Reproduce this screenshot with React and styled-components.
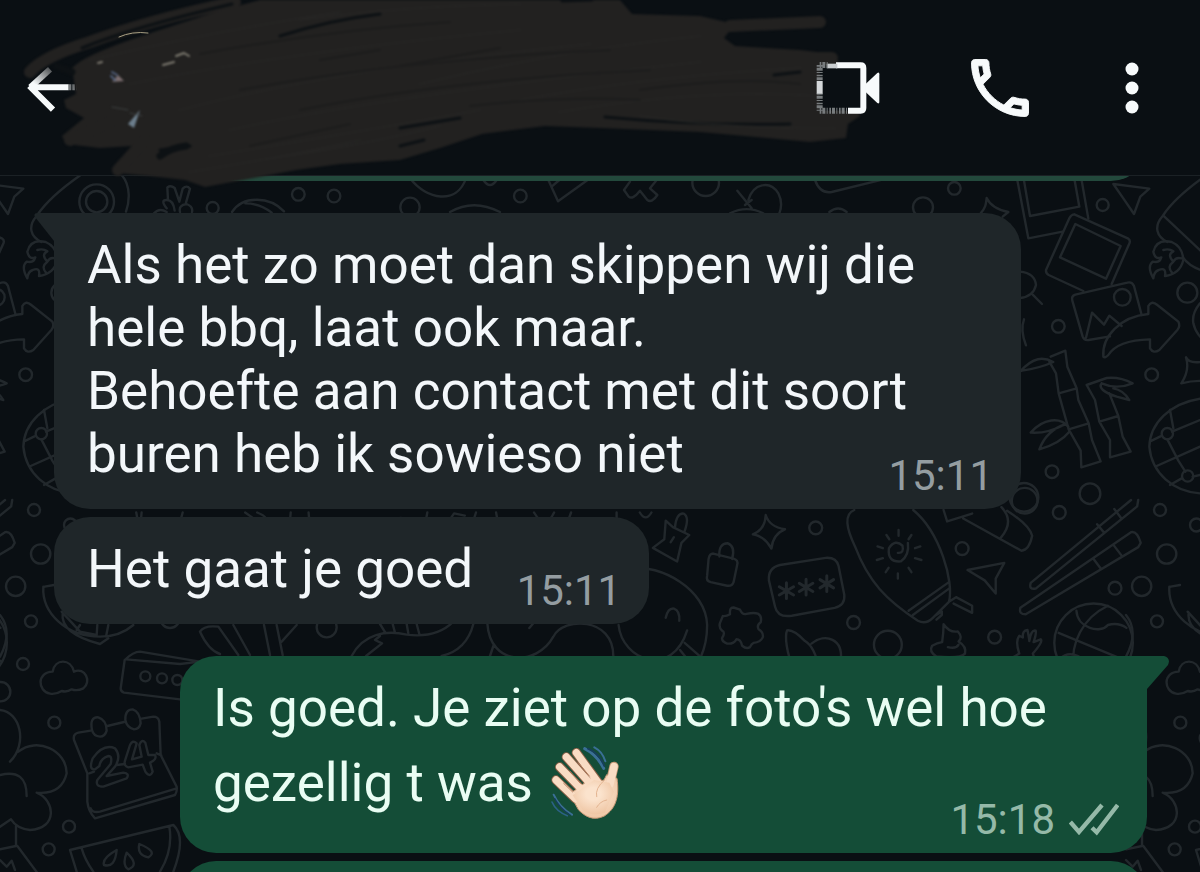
import React from "react";
import styled, { createGlobalStyle } from "styled-components";

const GlobalStyle = createGlobalStyle`
  * { box-sizing: border-box; }
  html, body { margin: 0; background: #0a0f13; }
  body { font-family: Roboto, "Liberation Sans", sans-serif; }
`;

const Screen = styled.div`
  position: relative;
  z-index: 0;
  display: flex;
  flex-direction: column;
  height: 100vh;
  overflow: hidden;
  background: #0a0f13;
`;

const WallpaperSvg = styled.svg`
  position: absolute;
  top: 0;
  left: 0;
  z-index: -1;
  width: 100%;
  height: 100%;
  fill: none;
  stroke: #22282c;
  stroke-width: 2.4;
  stroke-linecap: round;
  stroke-linejoin: round;

  path, circle, rect { vector-effect: non-scaling-stroke; }
`;

const Header = styled.header`
  position: relative;
  z-index: 1;
  flex: none;
  display: flex;
  align-items: center;
  justify-content: space-between;
  height: 176px;
  padding: 0 56px 0 26px;
  border-bottom: 1px solid #1b2125;
  background: #0a0f13;
`;

const Actions = styled.div`
  position: relative;
  display: flex;
  align-items: center;
  gap: 82px;
`;

const IconButton = styled.button`
  display: flex;
  padding: 0;
  border: 0;
  background: none;
  color: #f7fafb;
  cursor: pointer;
`;

const ScribbleSvg = styled.svg`
  position: absolute;
  top: 0;
  left: 0;
  width: 900px;
  height: 200px;
  pointer-events: none;
`;

const Chat = styled.main`
  flex: 1;
  display: flex;
  flex-direction: column;
  min-height: 0;
  overflow: hidden;
  padding: 0 53px 0 54px;
`;

const Bubble = styled.article`
  position: relative;
  flex: none;
  display: grid;
  align-self: ${(p) => (p.$out ? "flex-end" : "flex-start")};
  max-width: 967px;
  margin-top: ${(p) => (p.$first ? "32px" : "8px")};
  padding: 21px 28px 23px 33px;
  border-radius: 36px;
  border-top-left-radius: ${(p) => (p.$first && !p.$out ? "0" : "36px")};
  border-top-right-radius: ${(p) => (p.$first && p.$out ? "0" : "36px")};
  background: ${(p) => (p.$out ? "#144d37" : "#1f2629")};
  color: ${(p) => (p.$out ? "#e9fdf3" : "#f3f7fa")};
`;

const CutOffBubble = styled(Bubble)`
  width: 100%;
  height: 120px;
  margin-top: ${(p) => (p.$above ? "-115px" : "8px")};
  background: ${(p) => (p.$above ? "#23493c" : "#144d37")};
`;

const Text = styled.p`
  grid-area: 1 / 1;
  margin: 0;
  font-size: 53px;
  line-height: 63px;
  white-space: pre-line;
`;

const MetaSpace = styled.span`
  display: inline-block;
  width: ${(p) => (p.$ticks ? "190px" : "148px")};
`;

const Meta = styled.footer`
  grid-area: 1 / 1;
  place-self: end;
  display: flex;
  align-items: center;
  gap: 14px;
  margin-bottom: -10px;
  font-size: 42px;
  line-height: 40px;
  color: ${(p) => (p.$out ? "#95b9a8" : "#949da1")};
`;

const Tail = styled.svg`
  position: absolute;
  top: 0;
  ${(p) => (p.$out ? "right: -22px;" : "left: -20px;")}
  fill: ${(p) => (p.$out ? "#144d37" : "#1f2629")};
`;

const EmojiSvg = styled.svg`
  vertical-align: -29px;
`;

function Area({ x, y, zoom, children }) {
  return <g transform={`translate(${x} ${y}) scale(${1 / zoom})`}>{children}</g>;
}

function Rings({ at }) {
  return at.map(([cx, cy, r]) => <circle key={`${cx}-${cy}`} cx={cx} cy={cy} r={r} />);
}

function Wallpaper() {
  return (
    <WallpaperSvg viewBox="0 0 1200 872" preserveAspectRatio="xMinYMin slice" aria-hidden="true">
      <defs>
        <g id="doodles">
          {/* photos, arrow, rocket, bamboo and football */}
          <Area x={960} y={170} zoom={3}>
            <path d="M62 130C78 112 78 100 80 84Q95 116 145 126L128 140" />
            <path d="M170 20L205 205L308 185M190 20L210 138L358 110L342 20M363 20L385 146" />
            <path d="M343 133L505 206Q511 210 509 218L455 342M343 133Q334 133 328 145L258 300Q257 310 266 315L370 363" />
            <path d="M346 162L482 228L438 326L300 262Z" />
            <path d="M545 435L522 348Q516 334 502 338L346 374Q333 378 337 392L368 500Q372 512 386 510L450 499M378 503L396 428L432 464L448 437L485 468" />
            <path d="M430 560C425 500 480 440 565 432L565 408Q575 390 592 405L655 455Q662 468 652 480L598 540Q580 552 570 535L570 508C500 510 460 530 445 555Q435 565 430 560Z" />
            <path d="M460 42L568 56L541 80L522 132L492 88Z" />
            <path d="M610 135C640 90 690 50 740 15M863 15C893 50 885 100 876 125M608 138C580 170 590 200 622 216M610 137L725 245M668 262Q690 292 730 302" />
            <path d="M580 325Q560 290 578 275Q600 280 604 262Q585 270 580 245Q590 205 635 216Q668 230 670 270Q660 312 615 318Q620 290 596 300Q582 305 580 325ZM610 240Q628 235 640 244Q620 254 640 275Q648 260 664 265M640 275Q620 290 636 308" />
            <path d="M180 305Q225 310 228 345Q220 380 180 384M218 374L246 402M192 448Q180 480 198 526M180 605C220 560 250 560 280 576Q240 594 186 602M272 560L316 542L322 590L350 655L296 670L288 610L268 575M296 670L326 778L386 760L355 690L350 655M326 778L362 842L364 892L422 874L396 810L386 760" />
            <path d="M380 645L440 624Q480 620 518 640Q470 660 425 640M425 640Q410 660 470 680L508 690Q490 660 460 655M380 645L405 690L418 755L475 738L448 670M418 755L450 810L450 862L512 845L488 800L475 738M325 770C300 740 250 745 212 788Q260 792 318 762Q260 780 238 838Q300 820 328 785" />
            <path d="M720 686C630 700 570 760 568 830C575 910 640 965 720 970M720 750L636 785M640 775L630 720M622 808L655 872L676 905M590 888L720 830M575 812L606 797M665 925L630 945M698 920L720 915" />
            <path d="M765 565Q690 590 678 562Q690 600 664 640Q720 625 770 640M720 400Q695 430 700 460Q705 485 725 505" />
            <Rings at={[[428, 105, 18], [295, 469, 19], [487, 382, 25], [682, 368, 30], [575, 614, 19], [276, 905, 19], [390, 971, 31], [192, 982, 43], [788, 95, 52], [788, 95, 32], [622, 791, 17], [683, 918, 17]]} />
          </Area>

          {/* doodles peeking out below the header */}
          <Area x={0} y={0} zoom={3}>
            <path d="M462 640Q478 622 500 636M500 625Q480 600 500 600Q520 600 524 632M504 600L502 562Q512 554 524 564L538 605L548 566Q560 554 570 566L558 608M540 636Q535 615 560 612Q580 620 576 636M696 636C730 585 810 590 852 634M736 610Q780 610 815 638" />
            <Rings at={[[638, 624, 18], [895, 583, 19], [1002, 588, 19]]} />
          </Area>
          <Area x={400} y={0} zoom={3}>
            <path d="M30 535C80 600 170 615 198 535M150 636Q220 595 300 636M445 540L474 604L570 535M455 560L478 540M690 545L672 570L686 590Q698 600 720 572L742 600Q756 610 772 585L750 565L770 540M1012 572L1055 625M1045 600C1060 550 1110 540 1135 580Q1150 610 1138 640M1035 615L1055 600M990 640Q1040 615 1090 640M250 540Q270 570 290 540" />
            <Rings at={[[30, 622, 29], [361, 588, 19], [917, 548, 40]]} />
          </Area>
          <Area x={800} y={0} zoom={3}>
            <path d="M45 540Q60 582 95 576L250 538M88 636Q115 615 140 636" />
            <Rings at={[[463, 565, 19], [369, 622, 30]]} />
          </Area>

          {/* surfboard, password, chopsticks, basketball */}
          <Area x={640} y={500} zoom={2.8}>
            <path d="M72 58L92 76L138 98L116 120L104 172L36 134L68 110ZM98 76Q102 36 122 38Q140 48 124 90M95 104L86 118" />
            <path d="M222 158Q220 122 245 121Q268 130 258 165M205 150L262 164Q276 168 272 182L262 230Q258 242 244 240L198 230Q184 226 188 212L192 165Q195 150 205 150Z" />
            <path d="M352 42Q362 75 406 82Q372 95 368 136Q350 102 316 96Q350 84 352 42Z" />
            <path d="M392 182L520 162Q550 160 556 185L572 265Q575 295 545 302L425 324Q385 330 378 298L361 225Q358 190 392 182Z" />
            <path strokeWidth="3" d="M410 232L410 276M390 243L430 266M390 266L430 243M465 222L465 266M446 233L484 256M446 256L484 233M523 212L523 256M504 223L542 246M504 246L542 223" />
            <path d="M600 28C570 40 578 80 602 130C640 230 690 280 778 338Q800 350 820 330L865 285C880 230 840 90 765 28M752 310L862 232M764 322L868 246M866 284L885 272L930 296V316L878 290M825 325L845 312V322L830 335" />
            <path d="M722 148Q740 150 735 128Q715 108 697 135Q692 175 730 172Q755 155 750 120M724 84V100M722 206V220M690 98L698 110M760 98L752 110M665 130L680 135M785 130L770 135M663 168L680 163M788 168L770 163M688 202L696 190M760 202L752 190" />
            <path d="M850 28L860 60L930 38M905 52L1068 142Q1090 140 1098 100Q1090 70 1028 30M1012 20Q1050 60 1010 106" />
            <path d="M917 196L1020 176L996 220L996 262L965 225Z" />
            <path d="M1395 0L1392 18L1108 248Q1088 252 1094 232L1375 0M1280 68L1300 92M1328 25L1348 52M1065 302L1375 90Q1392 86 1402 120L1395 132L1080 320Q1060 320 1065 302ZM1270 165L1290 192M1325 125L1348 155" />
            <path d="M232 325Q242 326 252 320Q250 300 262 301L280 307Q286 322 298 319Q318 314 330 318Q342 324 338 342Q326 350 332 362Q346 370 344 384Q338 398 318 400Q312 402 308 412Q298 418 286 408Q282 390 270 390Q262 404 244 402Q228 396 230 386Q240 370 230 366Q220 358 224 344Z" />
            <path d="M430 470C410 430 405 380 412 365Q430 362 462 395Q490 412 500 470M480 402C520 370 570 390 562 450M562 442Q590 435 595 470M850 348Q866 372 890 368Q905 385 892 396Q915 410 910 430Q895 445 830 438Q808 425 818 408Q832 400 846 398Q850 370 850 348ZM862 412Q885 418 892 405" />
            <path d="M1000 466L1062 430Q1050 395 1062 380L1072 385Q1070 365 1085 364Q1090 390 1090 395Q1095 362 1108 366Q1110 375 1102 398L1122 390Q1130 395 1100 430L1112 466" />
            <path d="M1172 372L1365 452M1310 296C1240 330 1205 400 1214 470M1222 310C1225 360 1290 375 1310 350Q1340 342 1362 358M1176 445Q1210 410 1265 468" />
            <path d="M-30 190C60 180 185 250 188 350Q188 400 170 440M-60 350C-50 450 90 500 132 365M72 330Q78 302 95 304Q112 310 110 338M125 400L165 435L155 465M112 420L138 452M92 445L112 470" />
            <Rings at={[[492, 78, 18], [902, 136, 18], [1174, 35, 18], [1330, 247, 18], [598, 343, 18], [694, 405, 39], [993, 384, 18], [1270, 400, 110], [1077, 2, 36], [1558, 70, 18]]} />
          </Area>

          {/* cloud, calendar, router, tree and melon */}
          <Area x={0} y={490} zoom={3}>
            <path d="M130 290C125 370 200 440 300 440Q360 440 400 405M134 290L162 285M188 370Q180 430 300 462L325 445M185 365L240 425L290 435L292 405M240 405L230 420M325 405L318 440" />
            <path d="M150 611C112 604 110 546 158 545C165 505 212 505 222 545C255 530 276 575 250 595Q232 604 215 598Q200 608 185 603Q168 614 150 611Z" />
            <path d="M600 515L420 485Q400 485 374 510L362 595Q362 605 372 608L540 628M378 508L540 522M600 515L540 522" />
            <path d="M272 722L235 728Q218 732 222 750L262 850L262 935Q265 965 285 985L525 915Q532 905 530 890L482 795L478 695Q475 680 460 680L425 686M322 708L372 696M268 850L282 845M272 955Q278 970 300 965L530 895M470 790L484 796M350 825L375 822" />
            <path d="M276 720Q268 680 295 682Q320 690 320 722Q315 740 300 740Q280 738 276 720ZM376 690Q375 658 398 658Q420 665 422 700Q418 718 402 718Q380 712 376 690Z" />
            <path d="M285 838Q265 840 278 805Q310 760 345 775Q365 800 345 830L320 858L370 848Q390 850 380 865L310 890Q285 890 292 870L332 822Q338 798 325 798Q302 805 298 828ZM390 765Q398 748 410 760L396 808L425 800L418 765Q425 745 436 758L445 795L465 795Q472 808 450 818L458 845Q450 865 436 845L428 824L385 832Q370 828 375 812Z" />
            <path d="M0 660C60 665 85 760 30 815M55 785C110 740 200 780 200 850Q185 915 110 908M110 908C165 930 175 1015 90 1020Q50 1015 33 988L0 1010M0 855Q80 835 80 918M48 1008V1068L0 1078M52 1068L110 1146M0 1110L20 1130L35 1112L45 1140" />
            <path d="M230 1145L210 1080L520 1005Q560 1040 520 1145M245 1075Q255 1110 280 1145M508 1010Q520 1080 480 1145M350 1080Q305 1105 312 1125Q345 1135 350 1080ZM380 1088Q365 1125 385 1138Q420 1125 380 1088ZM418 1062Q410 1095 445 1102Q475 1085 418 1062Z" />
            <path d="M600 425Q612 405 655 410L715 495M600 425Q625 480 660 492M700 405L750 495M792 405L810 495M830 405L848 495M845 455L890 405M0 375Q40 425 0 500" />
            <Rings at={[[102, 60, 18], [122, 192, 29], [47, 289, 29], [93, 394, 18], [69, 522, 18], [2, 605, 29], [163, 698, 18], [207, 1010, 18], [146, 1078, 18], [436, 559, 15], [486, 565, 15], [532, 570, 15], [510, 385, 29]]} />
          </Area>
          <Area x={260} y={600} zoom={3}>
            <path d="M275 168C310 100 380 90 440 104Q530 115 580 65M318 168L366 130L345 120L360 108M360 72L376 98M398 72L405 98M440 72L445 100M470 72L478 102M545 168Q620 150 640 72M682 70C690 200 830 200 880 110C910 50 1060 50 1060 168M690 168L700 138M808 84L820 70" />
            <circle cx="200" cy="82" r="30" />
          </Area>
          <Area x={180} y={840} zoom={1.537}>
            <path d="M115 64Q112 38 124 38Q134 40 130 64M162 64Q158 38 170 38Q182 42 178 64M225 38L240 64L248 38M288 64Q295 40 320 44L312 64M345 38Q358 50 348 64M375 62L425 42M484 64Q485 50 497 38M545 38L552 64M590 38V64M645 64L650 38L680 62M752 64Q775 38 808 40M775 64Q790 45 835 40M860 64Q905 30 965 64M1005 64L1012 38M1048 38Q1080 80 1115 38M1180 46L1215 62M1222 38L1225 62M1280 38L1285 64M1318 38L1325 64" />
          </Area>
          <Area x={130} y={500} zoom={2.24}>
            <path d="M14 28L18 50M26 28L24 50M118 28L112 50M258 28L275 40L262 50M285 28Q315 40 298 50M360 28L358 50M400 28L402 50M530 50Q540 36 552 50M594 50Q606 30 620 50M662 50L666 28M712 50L726 30L750 35M768 50L775 28M820 28L824 50M905 28Q930 70 950 28M980 50L988 28M1040 50L1045 42L1090 50V28M1142 28Q1155 50 1168 28" />
          </Area>
        </g>
      </defs>
      <use href="#doodles" x="-1126" />
      <use href="#doodles" />
      <use href="#doodles" x="1126" />
    </WallpaperSvg>
  );
}

function Scribble() {
  return (
    <ScribbleSvg viewBox="0 0 900 200" aria-hidden="true" fill="none" strokeLinecap="round" strokeLinejoin="round">
      <defs>
        <filter id="soft" x="-5%" y="-5%" width="110%" height="110%" colorInterpolationFilters="sRGB">
          <feGaussianBlur stdDeviation="1" />
        </filter>
      </defs>
      <g filter="url(#soft)">
        <path
          fill="#222120"
          d="M72 68C90 50 150 34 215 12L260 0H620L632 14L700 16L735 24L724 38L735 46L800 50L835 54L842 72L838 92L856 106L860 116L848 124L846 138L810 142L700 132L600 128L545 126L482 134L440 148L400 160L340 164L296 170L205 187L185 180L150 176L116 173L132 146L100 148L66 144L62 136L84 118L66 108L64 100L76 94Z"
        />
        <g stroke="#222120" strokeWidth="12">
          <path d="M30 72Q44 56 90 42Q150 20 235 2M730 26L820 22M118 170L145 140M800 58L832 58M70 140L110 122M800 134L840 132" />
        </g>
        <g stroke="#0d1114" strokeWidth="3">
          <path d="M82 48Q130 28 232 4M280 36Q330 20 380 14M160 150L190 146M400 128L460 118M400 146L424 140M605 117Q700 126 790 124M774 75L800 72M562 1L592 0" />
          <path strokeWidth="7" d="M56 66L72 72M160 156Q170 148 186 146" />
        </g>
        <g stroke="#272625" strokeWidth="2" opacity="0.7">
          <path d="M90 60Q220 30 340 12M130 84Q300 50 520 30M180 110Q330 70 590 44M230 130Q380 96 700 62M210 156Q370 130 480 110M260 160Q360 146 440 126M420 84Q560 50 700 36M520 100Q650 76 800 68M560 112Q700 88 820 96M300 20Q400 6 520 4M640 116Q740 130 835 128M190 172Q290 156 360 140" />
        </g>
        <g stroke="#1c1c1c" strokeWidth="2" opacity="0.8">
          <path d="M200 54Q330 30 450 22M240 90Q400 60 610 50M300 110Q450 80 650 70M400 66L500 48M640 90Q740 76 800 84M320 60L380 50M470 106Q560 96 640 100M250 146L350 124" />
        </g>
      </g>
      <path d="M119 37Q132 31 148 33" stroke="#aaa184" strokeWidth="1" />
      <g filter="url(#soft)">
        <path d="M176 56L184 53L189 56M163 65L174 62M98 63L102 62" stroke="#7d7a70" strokeWidth="2" />
        <path d="M112 82L118 75L124 81Z" fill="#7c6e70" />
        <path d="M112 72L117 75M111 76L115 80" stroke="#52617d" strokeWidth="2" />
        <path d="M128 124L140 110L134 128Z" fill="#6d7f8d" />
        <path d="M112 107L128 110M130 113L142 116" stroke="#3e4242" strokeWidth="1" />
      </g>
    </ScribbleSvg>
  );
}

function BackIcon() {
  return (
    <svg width="52" height="56" viewBox="78 180 156 168" fill="none" stroke="currentColor" strokeWidth="18" aria-hidden="true">
      <defs>
        <linearGradient id="fade" x1="0" y1="1" x2="1" y2="0">
          <stop offset="0.2" stopColor="#f7fafb" />
          <stop offset="1" stopColor="#55585a" />
        </linearGradient>
      </defs>
      <path d="M91 262L150 208" stroke="url(#fade)" />
      <path d="M96 262H206M88 258L159 329" />
      <path d="M206 262H230" stroke="#777b7d" strokeDasharray="8 3" />
    </svg>
  );
}

function VideoIcon() {
  return (
    <svg width="64" height="54" viewBox="50 184 192 162" fill="none" stroke="currentColor" strokeWidth="18" aria-hidden="true">
      <rect x="61" y="197" width="130" height="136" stroke="none" fill="#0a0f13" />
      <path d="M110 197H184Q192 197 192 205V325Q192 333 184 333H146" />
      <path d="M82 199H114" strokeWidth="14" stroke="#c9cdcf" />
      <path d="M61 196V245M61 280V334M61 333H146M61 196H86" stroke="#777b7d" strokeDasharray="5 3 9 4 3 5" />
      <path d="M61 244V282" stroke="#d5d8da" />
      <path d="M198 254L234 220Q240 216 240 224V306Q240 314 234 310L198 276Z" fill="currentColor" stroke="none" />
    </svg>
  );
}

function CallIcon() {
  return (
    <svg width="76" height="76" viewBox="0 0 24 24" fill="currentColor" stroke="currentColor" strokeWidth="0.3" aria-hidden="true">
      <path d="M6.54 5c.06.89.21 1.76.45 2.59l-1.2 1.2c-.41-1.2-.67-2.47-.76-3.79h1.51m9.86 12.02c.85.24 1.72.39 2.6.45v1.49c-1.32-.09-2.59-.35-3.8-.75l1.2-1.19M7.5 3H4c-.55 0-1 .45-1 1 0 9.39 7.61 17 17 17 .55 0 1-.45 1-1v-3.49c0-.55-.45-1-1-1-1.24 0-2.45-.2-3.57-.57-.1-.04-.21-.05-.31-.05-.26 0-.51.1-.71.29l-2.2 2.2c-2.83-1.45-5.15-3.76-6.59-6.59l2.2-2.2c.28-.28.36-.67.25-1.02C8.7 6.45 8.5 5.25 8.5 4c0-.55-.45-1-1-1z" />
    </svg>
  );
}

function MoreIcon() {
  return (
    <svg width="24" height="56" viewBox="0 0 24 56" fill="currentColor" aria-hidden="true">
      <circle cx="12" cy="9" r="6.5" />
      <circle cx="12" cy="28" r="6.5" />
      <circle cx="12" cy="47" r="6.5" />
    </svg>
  );
}

function Ticks() {
  return (
    <svg width="50" height="34" viewBox="508 472 150 102" fill="none" stroke="currentColor" strokeWidth="13" role="img" aria-label="Afgeleverd">
      <path d="M512 529L538 559L607 478M577 546L591 560L654 478" />
    </svg>
  );
}

const fingers = "M170 240L228 296M181 201L248 270M201 171L268 246M231 158L294 244";

function WavingHand() {
  return (
    <EmojiSvg width="73" height="90" viewBox="140 120 219 270" fill="none" strokeLinecap="round" role="img" aria-label="👋🏻">
      <defs>
        <radialGradient id="skin" cx="0.5" cy="0.4" r="0.6">
          <stop offset="0.3" stopColor="#fbe3cd" />
          <stop offset="1" stopColor="#efc6a4" />
        </radialGradient>
      </defs>
      <path d="M256 146Q292 164 313 205" stroke="#3a6f95" strokeWidth="9" />
      <path d="M266 146Q300 160 315 198" stroke="#163f5a" strokeWidth="6" />
      <path d="M285 142Q310 155 318 184M163 284Q180 322 218 344" stroke="#3a6f95" strokeWidth="6" />
      <path d="M158 306Q170 334 204 347" stroke="#2c6186" strokeWidth="5" />
      <path d="M166 296Q182 326 212 345" stroke="#163f5a" strokeWidth="4" />
      <path d={fingers} stroke="#8b6047" strokeWidth="28" />
      <path d="M344 199L332 250" stroke="#c59775" strokeWidth="28" />
      <path d="M212 282L284 228Q304 246 314 240L322 224L353 235C360 285 352 325 315 348C282 364 258 350 238 330Z" fill="url(#skin)" stroke="#c59775" strokeWidth="3" />
      <path d={fingers} stroke="#f9dcc4" strokeWidth="22" />
      <path d="M344 200L332 252" stroke="#f9dcc4" strokeWidth="23" />
      <path d="M220 286L284 240L330 248L344 275L316 338Q280 352 250 330Z" fill="url(#skin)" />
      <path d="M193 250L220 276M212 214L243 250M237 188L270 228" stroke="#b37f5f" strokeWidth="3" />
      <path d="M316 240Q286 265 292 290M292 322Q302 304 322 300" stroke="#e3b491" strokeWidth="3" />
    </EmojiSvg>
  );
}

function Message({ out, first, time, children }) {
  return (
    <Bubble $out={out} $first={first}>
      {first && (
        <Tail $out={out} width="22" height="34" viewBox="0 0 22 34" aria-hidden="true">
          <path d={out ? "M0 0H17Q24 2 21 9L0 33Z" : "M4 0H22V28L20 28L1 4Q-1 0 4 0Z"} />
        </Tail>
      )}
      <Text>
        {children}
        <MetaSpace $ticks={out} />
      </Text>
      <Meta $out={out}>
        <time>{time}</time>
        {out && <Ticks />}
      </Meta>
    </Bubble>
  );
}

export default function App() {
  return (
    <Screen>
      <GlobalStyle />
      <Wallpaper />
      <Header>
        <IconButton type="button" aria-label="Terug"><BackIcon /></IconButton>
        <Scribble />
        <Actions>
          <IconButton type="button" aria-label="Videogesprek"><VideoIcon /></IconButton>
          <IconButton type="button" aria-label="Bellen"><CallIcon /></IconButton>
          <IconButton type="button" aria-label="Meer opties"><MoreIcon /></IconButton>
        </Actions>
      </Header>
      <Chat>
        <CutOffBubble $out $above aria-hidden="true" />
        <Message first time="15:11">
          {"Als het zo moet dan skippen wij die hele bbq, laat ook maar.\nBehoefte aan contact met dit soort buren heb ik sowieso niet"}
        </Message>
        <Message time="15:11">Het gaat je goed</Message>
        <Message out first time="15:18">
          Is goed. Je ziet op de foto's wel hoe gezellig t was <WavingHand />
        </Message>
        <CutOffBubble $out aria-hidden="true" />
      </Chat>
    </Screen>
  );
}
